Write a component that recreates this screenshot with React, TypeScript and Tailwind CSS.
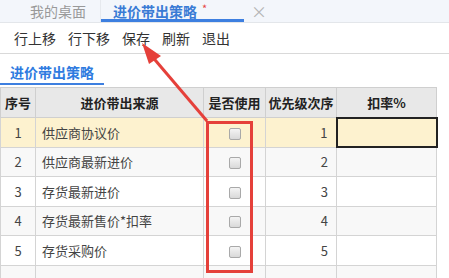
import React from "react";

const rows = [
  { n: 1, src: "供应商协议价" },
  { n: 2, src: "供应商最新进价" },
  { n: 3, src: "存货最新进价" },
  { n: 4, src: "存货最新售价*扣率" },
  { n: 5, src: "存货采购价" },
  { n: 6, src: "" },
];

function Box() {
  return (
    <span className="inline-block w-[12px] h-[12px] rounded-[2px] border border-[#a9a9a9] bg-gradient-to-b from-[#f4f4f4] to-[#d9d9d9] align-middle" />
  );
}

export default function App() {
  return (
    <div
      className="relative w-[449px] h-[278px] overflow-hidden bg-white text-[#333]"
      style={{ fontFamily: '"Noto Sans CJK SC", "Microsoft YaHei", sans-serif' }}
    >
      {/* tab bar */}
      <div className="h-[23px] bg-[#f3f6fb] border-b border-[#e3e6ea] flex items-stretch text-[14px] leading-none">
        <div className="w-[101px] flex items-center justify-center text-[#999] border-r border-[#e6e9ee]">
          <span className="pl-[18px] pr-[2px]">我的桌面</span>
        </div>
        <div className="relative w-[143px] flex items-center pl-[12px] text-[#3a7bd5] font-bold">
          进价带出策略
          <span className="text-[#e64545] text-[11px] ml-[5px] -mt-[6px] font-normal">*</span>
          <div className="absolute left-0 right-0 bottom-0 h-[3px] bg-[#3d7fe0]" />
        </div>
        <div className="flex items-center pl-[7px] text-[#b5b5b5] text-[16px]">×</div>
      </div>

      {/* toolbar */}
      <div className="h-[31px] border-b border-[#d9d9d9] flex items-center gap-[12px] pl-[14px] text-[14px] text-[#333]">
        <span>行上移</span>
        <span>行下移</span>
        <span>保存</span>
        <span>刷新</span>
        <span>退出</span>
      </div>

      {/* section title */}
      <div className="h-[33px] pt-[5px]">
        <div className="inline-flex flex-col">
          <div className="pl-[10px] pr-[10px] text-[14px] font-bold text-[#2f7be0] h-[21px] leading-[20px]">进价带出策略</div>
          <div className="h-[2px] w-[104px] bg-[#3d7fe0]" />
        </div>
      </div>

      {/* table */}
      <table className="border-collapse text-[13px] table-fixed">
        <colgroup>
          <col className="w-[35px]" />
          <col className="w-[168px]" />
          <col className="w-[62px]" />
          <col className="w-[71px]" />
          <col className="w-[100px]" />
        </colgroup>
        <thead>
          <tr className="h-[30px] bg-[#e8e8e8] font-bold text-[#222]">
            <th className="border border-[#cfcfcf] font-bold">序号</th>
            <th className="border border-[#cfcfcf] font-bold">进价带出来源</th>
            <th className="border border-[#cfcfcf] font-bold">是否使用</th>
            <th className="border border-[#cfcfcf] font-bold">优先级次序</th>
            <th className="border border-[#cfcfcf] font-bold">扣率%</th>
          </tr>
        </thead>
        <tbody>
          {rows.map((r, i) => {
            const bg = i === 0 ? "bg-[#fdf2cf]" : i % 2 === 1 ? "bg-[#f8f8f8]" : "bg-white";
            return (
              <tr key={r.n} className={`h-[29.5px] ${bg} text-[#444]`}>
                <td className="border border-[#d4d4d4] text-center">{r.src ? r.n : ""}</td>
                <td className="border border-[#d4d4d4] pl-[6px]">{r.src}</td>
                <td className="border border-[#d4d4d4] text-center">{r.src ? <Box /> : null}</td>
                <td className="border border-[#d4d4d4] text-right pr-[8px]">{r.src ? r.n : ""}</td>
                <td
                  className={
                    i === 0
                      ? "border-2 border-[#222] bg-[#fdf2cf]"
                      : "border border-[#d4d4d4]"
                  }
                ></td>
              </tr>
            );
          })}
        </tbody>
      </table>

      {/* red annotation box */}
      <div className="absolute left-[206px] top-[121px] w-[47px] h-[152px] border-[3px] border-[#e5403a]" />

      {/* red arrow */}
      <svg className="absolute left-0 top-0 pointer-events-none" width="449" height="278">
        <line x1="207" y1="121" x2="150" y2="54" stroke="#e5403a" strokeWidth="3" />
        <polygon points="142,43 161,56 149,64" fill="#e5403a" />
      </svg>
    </div>
  );
}
